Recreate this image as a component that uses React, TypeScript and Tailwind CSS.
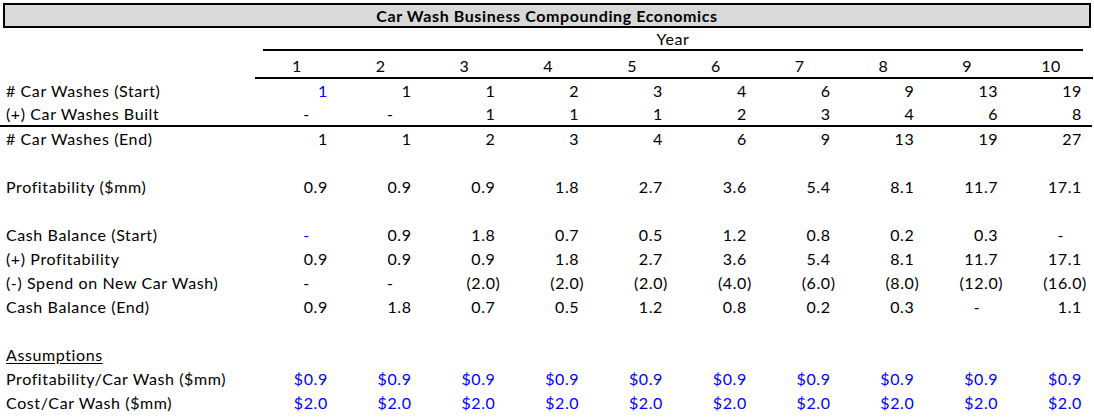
import React from "react";

type Cell = { v: string; blue?: boolean };

const DASH = "-";

const row = (vals: string[], blueIdx: number[] = []): Cell[] =>
  vals.map((v, i) => ({ v, blue: blueIdx.includes(i) }));

const ALL = [0, 1, 2, 3, 4, 5, 6, 7, 8, 9];

const ROWS: { label: string; cells?: Cell[]; rule?: boolean; underline?: boolean }[] = [
  { label: "# Car Washes (Start)", cells: row(["1", "1", "1", "2", "3", "4", "6", "9", "13", "19"], [0]) },
  { label: "(+) Car Washes Built", cells: row([DASH, DASH, "1", "1", "1", "2", "3", "4", "6", "8"]), rule: true },
  { label: "# Car Washes (End)", cells: row(["1", "1", "2", "3", "4", "6", "9", "13", "19", "27"]) },
  { label: "" },
  { label: "Profitability ($mm)", cells: row(["0.9", "0.9", "0.9", "1.8", "2.7", "3.6", "5.4", "8.1", "11.7", "17.1"]) },
  { label: "" },
  { label: "Cash Balance (Start)", cells: row([DASH, "0.9", "1.8", "0.7", "0.5", "1.2", "0.8", "0.2", "0.3", DASH], [0]) },
  { label: "(+) Profitability", cells: row(["0.9", "0.9", "0.9", "1.8", "2.7", "3.6", "5.4", "8.1", "11.7", "17.1"]) },
  { label: "(-) Spend on New Car Wash)", cells: row([DASH, DASH, "(2.0)", "(2.0)", "(2.0)", "(4.0)", "(6.0)", "(8.0)", "(12.0)", "(16.0)"]) },
  { label: "Cash Balance (End)", cells: row(["0.9", "1.8", "0.7", "0.5", "1.2", "0.8", "0.2", "0.3", DASH, "1.1"]) },
  { label: "" },
  { label: "Assumptions", underline: true },
  { label: "Profitability/Car Wash ($mm)", cells: row(Array(10).fill("$0.9"), ALL) },
  { label: "Cost/Car Wash ($mm)", cells: row(Array(10).fill("$2.0"), ALL) },
];

function Value({ cell }: { cell: Cell }) {
  const color = cell.blue ? "text-[#0000ff]" : "text-black";
  let pad = "pr-[10px]";
  if (cell.v === DASH) pad = "pr-[28px]";
  else if (cell.v.startsWith("(")) pad = "pr-[5px]";
  return <div className={`text-right whitespace-nowrap ${pad} ${color}`}>{cell.v}</div>;
}

export default function App() {
  return (
    <div className="w-[1094px] h-[420px] bg-white text-black text-[16px] tracking-[0.6px] leading-none font-['Lato','Liberation_Sans',sans-serif] overflow-hidden">
      {/* Title */}
      <div className="mx-[3px] mt-[3px] h-[25px] border-2 border-black bg-[#d9d9d9] flex items-center justify-center font-bold">
        Car Wash Business Compounding Economics
      </div>

      {/* Year header */}
      <div className="grid grid-cols-[254px_repeat(10,83.8px)] h-[23px]">
        <div />
        <div className="col-span-10 mx-[9px] border-b-2 border-black flex items-center justify-center">Year</div>
      </div>

      {/* Year numbers */}
      <div className="grid grid-cols-[254px_repeat(10,83.8px)] h-[28px]">
        <div />
        <div className="col-span-10 ml-px border-b-2 border-black grid grid-cols-[repeat(10,83.8px)] -mr-px">
          {Array.from({ length: 10 }, (_, i) => (
            <div key={i} className="flex items-center justify-center pt-[3px]">{i + 1}</div>
          ))}
        </div>
      </div>

      {/* Body rows */}
      {ROWS.map((r, idx) => (
        <div
          key={idx}
          className={`grid grid-cols-[254px_repeat(10,83.8px)] h-[24px] items-center ${r.rule ? "border-b-2 border-black mr-[2px]" : ""}`}
        >
          <div className={`pl-[6px] whitespace-nowrap ${r.underline ? "underline underline-offset-2" : ""}`}>{r.label}</div>
          {r.cells?.map((c, i) => <Value key={i} cell={c} />)}
        </div>
      ))}
    </div>
  );
}
